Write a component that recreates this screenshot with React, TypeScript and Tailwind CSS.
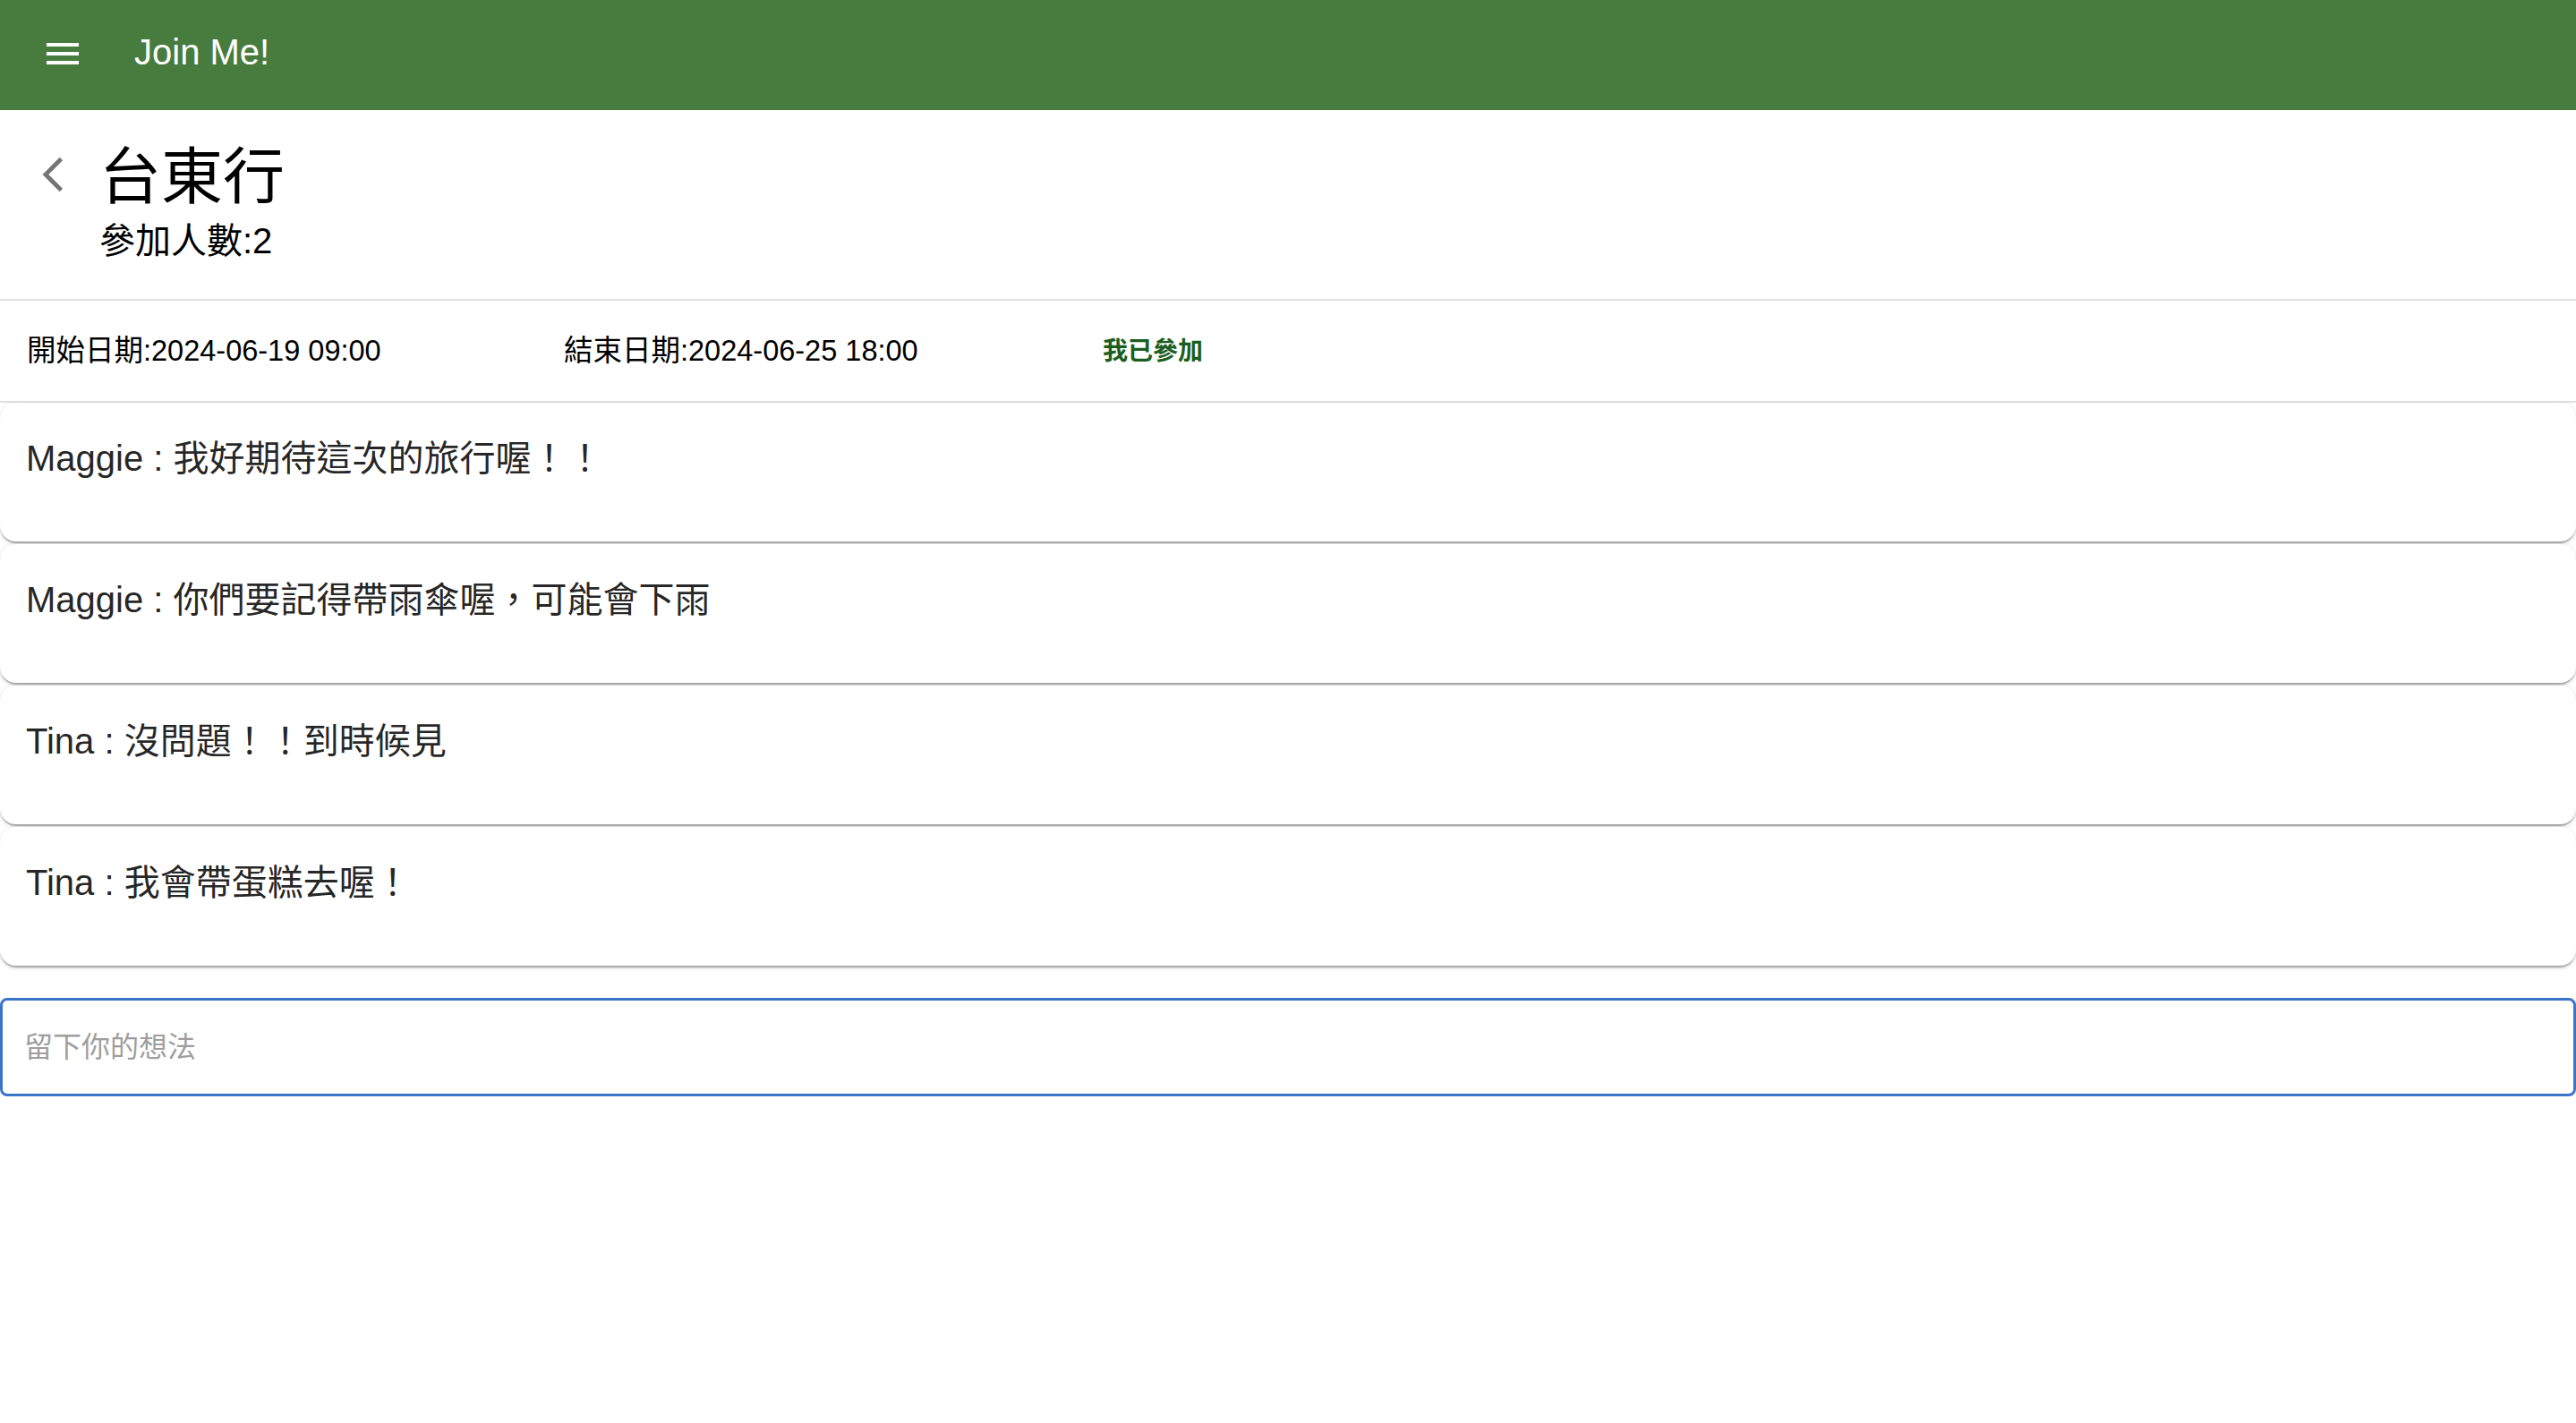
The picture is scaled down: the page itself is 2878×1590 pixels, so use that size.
import React from 'react';

const messages = [
  { name: 'Maggie', text: '我好期待這次的旅行喔！！' },
  { name: 'Maggie', text: '你們要記得帶雨傘喔，可能會下雨' },
  { name: 'Tina', text: '沒問題！！到時候見' },
  { name: 'Tina', text: '我會帶蛋糕去喔！' },
];

export default function App() {
  return (
    <div className="min-h-screen bg-white font-['Liberation_Sans','Noto_Sans_CJK_TC',sans-serif] text-black/[0.87]">
      <header className="flex h-[123px] items-center bg-[#477c3e] pl-[46px]">
        <svg viewBox="0 0 24 24" className="mb-[3px] h-[48px] w-[48px] fill-white">
          <path d="M3 18h18v-2H3zm0-5h18v-2H3zm0-7v2h18V6z" />
        </svg>
        <span className="mb-[7px] ml-[56px] text-[40px] leading-none text-white">Join Me!</span>
      </header>

      <section className="flex h-[211px] items-start pl-[36px] pt-[36px]">
        <svg viewBox="0 0 24 24" className="mt-[13px] h-[46px] w-[46px] fill-[#757575]">
          <path d="M17.77 3.77 16 2 6 12l10 10 1.77-1.77L9.54 12z" />
        </svg>
        <div className="ml-[29px] flex flex-col">
          <h1 className="text-[69px] leading-[80px] text-black">台東行</h1>
          <p className="mt-[6px] text-[40px] leading-[48px] text-black">參加人數:2</p>
        </div>
      </section>

      <div className="flex h-[116px] items-center border-y-2 border-[#e0e0e0] text-[32.5px] text-black">
        <div className="w-[600px] pl-[30px]">開始日期:2024-06-19 09:00</div>
        <div className="w-[600px] pl-[30px]">結束日期:2024-06-25 18:00</div>
        <div className="w-[600px] pl-[32px] pt-[2px] text-[28px] font-bold text-[#1b5e20]">我已參加</div>
      </div>

      <div className="flex flex-col gap-[3px]">
        {messages.map((m, i) => (
          <div
            key={i}
            className="h-[155px] rounded-[18px] bg-white pl-[29px] pt-[33px] shadow-[0_4px_2px_-2px_rgba(0,0,0,0.2),0_2px_2px_0_rgba(0,0,0,0.14),0_2px_6px_0_rgba(0,0,0,0.12)]"
          >
            <p className="text-[40px] leading-[58px]">
              {m.name} : {m.text}
            </p>
          </div>
        ))}
      </div>

      <div className="mt-[36px]">
        <input
          autoFocus
          placeholder="留下你的想法"
          className="h-[110px] w-full rounded-[8px] border-[3px] border-[#3b74c9] pl-[24px] text-[32px] caret-[#2f6fe0] outline-none placeholder:text-[#9e9e9e]"
        />
      </div>
    </div>
  );
}
